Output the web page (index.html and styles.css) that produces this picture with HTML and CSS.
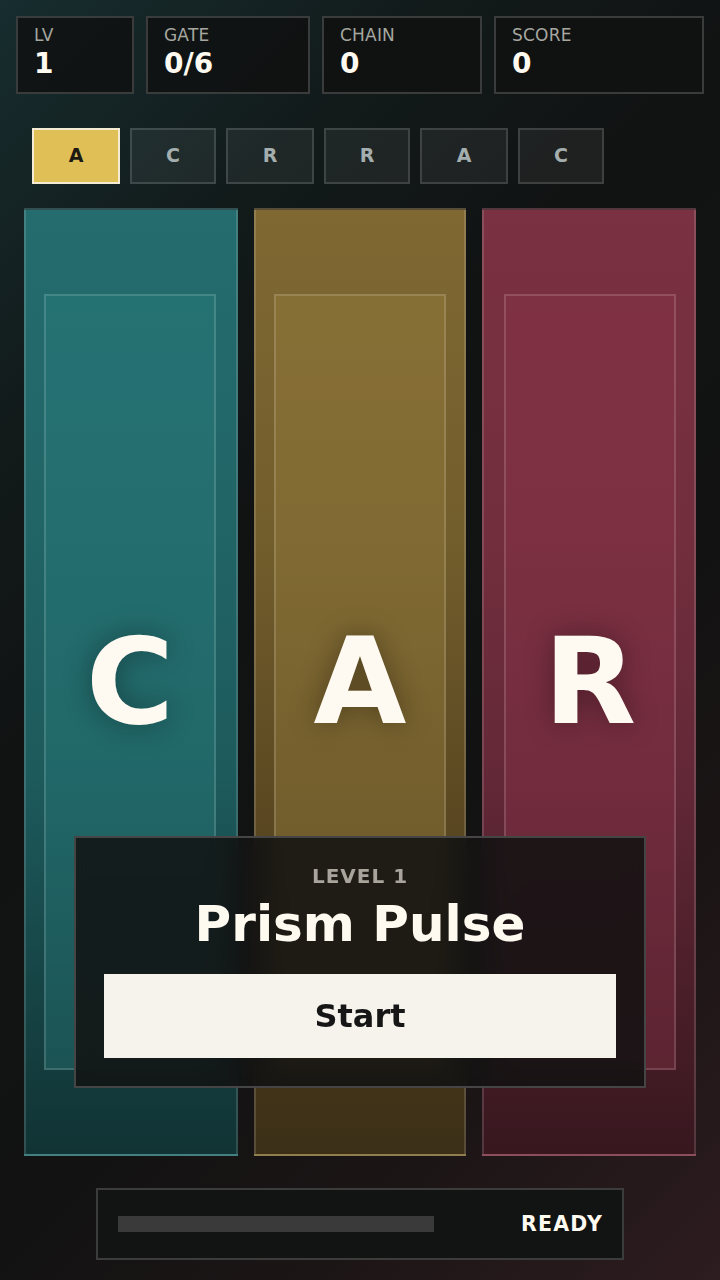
FILE: index.html
```html
<!DOCTYPE html>
<html lang="en">
<head>
<meta charset="utf-8">
<title>Prism Pulse</title>
<link rel="stylesheet" href="styles.css">
</head>
<body>
<div class="app">
  <div class="hud">
    <div class="stat"><div class="stat-label">LV</div><div class="stat-value">1</div></div>
    <div class="stat"><div class="stat-label">GATE</div><div class="stat-value">0/6</div></div>
    <div class="stat"><div class="stat-label">CHAIN</div><div class="stat-value">0</div></div>
    <div class="stat"><div class="stat-label">SCORE</div><div class="stat-value">0</div></div>
  </div>

  <div class="sequence">
    <div class="tab tab-active">A</div>
    <div class="tab">C</div>
    <div class="tab">R</div>
    <div class="tab">R</div>
    <div class="tab">A</div>
    <div class="tab">C</div>
  </div>

  <div class="stage">
    <div class="lane lane-teal"><div class="lane-inner"><span class="glyph">C</span></div></div>
    <div class="lane lane-gold"><div class="lane-inner"><span class="glyph">A</span></div></div>
    <div class="lane lane-rose"><div class="lane-inner"><span class="glyph">R</span></div></div>

    <div class="modal">
      <div class="modal-level">LEVEL 1</div>
      <div class="modal-title">Prism Pulse</div>
      <button class="start-btn">Start</button>
    </div>
  </div>

  <div class="status">
    <div class="track"></div>
    <div class="status-text">READY</div>
  </div>
</div>
</body>
</html>
```

FILE: styles.css
```css
* { box-sizing: border-box; }

html, body {
  margin: 0;
  padding: 0;
  width: 720px;
  height: 1280px;
  overflow: hidden;
}

body {
  font-family: "DejaVu Sans", "Liberation Sans", sans-serif;
  color: #fffaf0;
  background: linear-gradient(135deg, #172d2f 0%, #121a1a 22%, #111313 38%, #121212 62%, #1c1516 80%, #2d1c20 100%);
}

.app {
  width: 720px;
  height: 1280px;
  display: flex;
  flex-direction: column;
}

/* HUD */
.hud {
  display: grid;
  grid-template-columns: 118px 164px 160px 210px;
  gap: 12px;
  padding: 16px 16px 0;
}

.stat {
  height: 78px;
  border: 2px solid #393c3b;
  background: rgba(16, 17, 17, 0.88);
  padding: 7px 16px 12px;
}

.stat-label {
  font-size: 17px;
  line-height: 20px;
  color: #a6a7a0;
  letter-spacing: 0.2px;
}

.stat-value {
  margin-top: 3px;
  font-size: 28px;
  line-height: 32px;
  font-weight: bold;
  color: #fffaf0;
}

/* Sequence tabs */
.sequence {
  display: flex;
  gap: 10px;
  margin-top: 34px;
  padding-left: 32px;
}

.tab {
  width: 88px;
  height: 56px;
  border: 2px solid rgba(255, 255, 255, 0.14);
  background: rgba(255, 255, 255, 0.06);
  display: flex;
  align-items: center;
  justify-content: center;
  font-size: 19px;
  font-weight: bold;
  color: #a4aeae;
  padding-bottom: 3px;
}

.tab:nth-child(even) {
  width: 86px;
}

.tab-active {
  background: #dfbf56;
  border-color: #f4ecd2;
  color: #1b1912;
}

/* Stage */
.stage {
  position: relative;
  margin: 24px 24px 0;
  height: 948px;
  display: grid;
  grid-template-columns: 214px 212px 214px;
  gap: 16px;
}

.lane {
  border: 2px solid rgba(255, 255, 255, 0.14);
  padding: 84px 18px;
  display: flex;
}

.lane-teal {
  padding-right: 20px;
  background: linear-gradient(180deg, #246c6e 0%, #216466 35%, #1d5a5c 60%, #113334 100%);
}

.lane-gold {
  background: linear-gradient(180deg, #7f6832 0%, #725d2c 35%, #5e4b23 60%, #3b2f17 100%);
}

.lane-rose {
  padding-left: 20px;
  background: linear-gradient(180deg, #7a3141 0%, #722e3d 35%, #632837 60%, #38171f 100%);
}

.lane-inner {
  flex: 1;
  border: 2px solid rgba(255, 255, 255, 0.15);
  display: flex;
  align-items: center;
  justify-content: center;
}

.lane-teal .lane-inner { background: rgba(42, 128, 130, 0.35); }
.lane-gold .lane-inner { background: rgba(152, 128, 62, 0.4); }
.lane-rose .lane-inner { background: rgba(142, 52, 74, 0.36); }

.glyph {
  font-size: 120px;
  line-height: 1;
  font-weight: bold;
  color: #fffaf1;
  text-shadow: 0 0 28px rgba(0, 0, 0, 0.35);
}

/* Modal overlay */
.modal {
  position: absolute;
  left: 50px;
  right: 50px;
  bottom: 68px;
  border: 2px solid #444544;
  background: rgba(17, 17, 17, 0.86);
  backdrop-filter: blur(10px);
  padding: 26px 28px 28px;
  display: flex;
  flex-direction: column;
  align-items: stretch;
  text-align: center;
}

.modal-level {
  font-size: 20px;
  line-height: 24px;
  font-weight: bold;
  letter-spacing: 1px;
  color: #a9a59d;
}

.modal-title {
  margin-top: 6px;
  font-size: 50px;
  line-height: 60px;
  font-weight: bold;
  color: #fffaf0;
}

.start-btn {
  margin-top: 20px;
  height: 84px;
  border: none;
  background: #f6f2ec;
  font-family: "DejaVu Sans", "Liberation Sans", sans-serif;
  font-size: 32px;
  font-weight: bold;
  color: #161616;
  padding: 0;
}

/* Status bar */
.status {
  margin: 32px auto 0;
  width: 528px;
  height: 72px;
  border: 2px solid #3c3c3c;
  background: #121313;
  padding: 0 19px 0 20px;
  display: grid;
  grid-template-columns: 316px 1fr;
  align-items: center;
}

.track {
  height: 16px;
  background: #3a3a3a;
}

.status-text {
  text-align: right;
  font-size: 20.5px;
  font-weight: bold;
  letter-spacing: 1.2px;
  color: #fffaf0;
}
```
